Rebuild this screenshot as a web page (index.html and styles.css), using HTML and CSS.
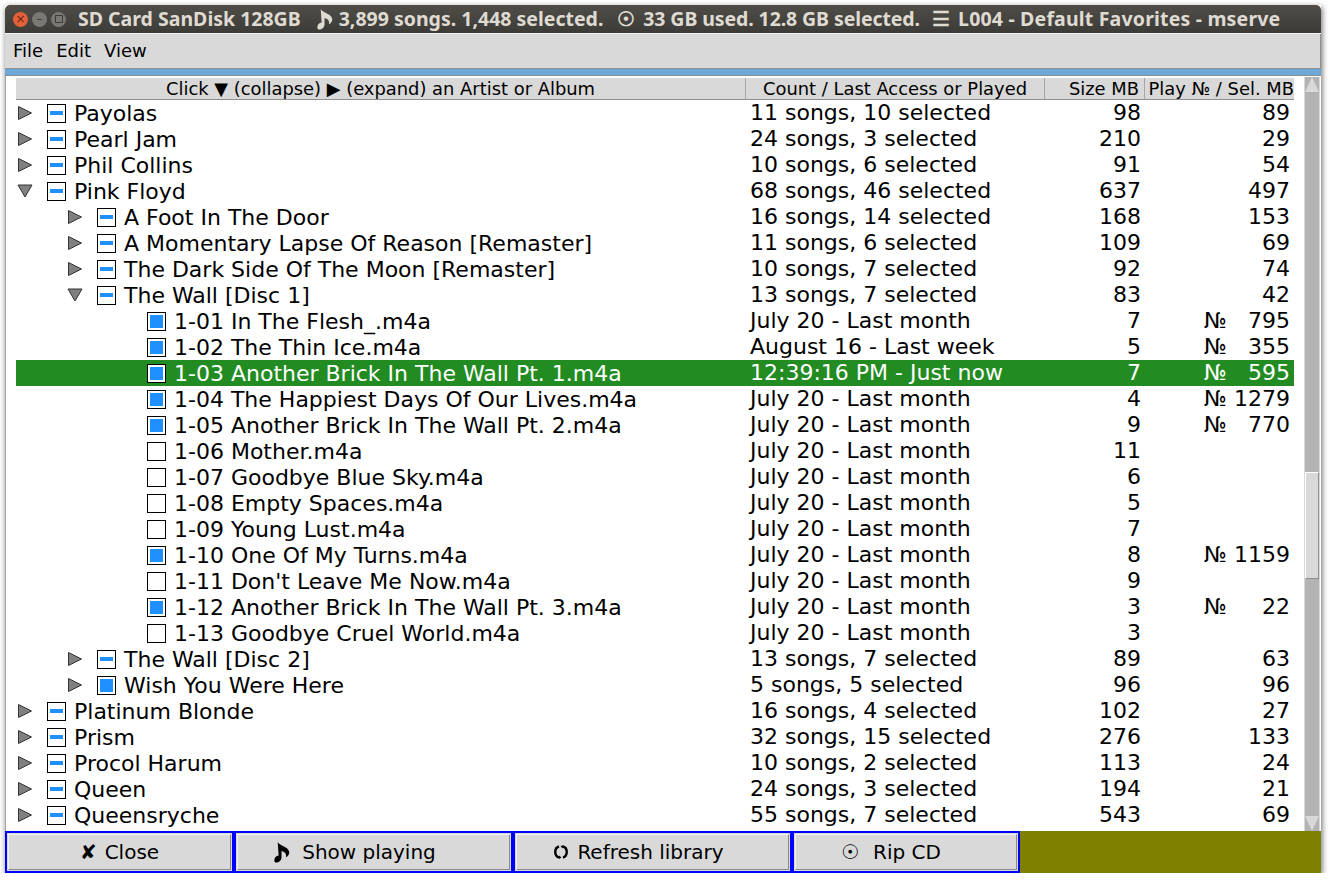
FILE: index.html
```html
<!DOCTYPE html>
<html>
<head>
	<meta charset="utf-8">
	<title>mserve</title>
	<link rel="stylesheet" href="styles.css">
</head>
<body>
<svg class="defs" width="0" height="0">
	<symbol id="note" viewBox="0 0 16 22">
		<path d="M3.500 0 C5 4 14 4.500 15.500 10 C16 12.500 14.500 15 12 16 C13 13 11.500 10.500 7.500 9.500 L7.500 16 C7.500 19.500 4.500 21.500 2 21.500 C-0.500 21.500 -0.500 18 1 16 C2 14.500 3.500 14 4.500 14.500 Z" fill="currentColor"/>
	</symbol>
	<symbol id="refresh" viewBox="0 0 14 14">
		<path d="M5 1.500 C0 3 0 11 5 12.500 M9 1.500 C14 3 14 11 9 12.500" fill="none" stroke="currentColor" stroke-width="2.400"/>
		<path d="M9 0 L9 3.500 L6.500 1.500 Z M5 10.500 L5 14 L7.500 12.500 Z" fill="currentColor"/>
	</symbol>
</svg>

<div class="win">
	<div class="titlebar">
		<div class="wbtns">
			<span class="wbtn close">×</span>
			<span class="wbtn">–</span>
			<span class="wbtn"><i class="sq"></i></span>
		</div>
		<div class="wtitle">
			<span>SD Card SanDisk 128GB</span>
			<span class="ti"><svg class="ti-note"><use href="#note"/></svg>3,899 songs. 1,448 selected.</span>
			<span class="ti ti-used"><span class="tg">☉</span>33 GB used. 12.8 GB selected.</span>
			<span class="ti ti-list"><span class="tg">☰</span>L004 - Default Favorites - mserve</span>
		</div>
	</div>
	<div class="menubar">
		<span>File</span><span>Edit</span><span>View</span>
	</div>
	<div class="stripe"></div>

	<div class="main">
		<div class="tree">
			<div class="heading">
				<div class="h c1">Click ▼ (collapse) ▶ (expand) an Artist or Album</div>
				<div class="h c2">Count / Last Access or Played</div>
				<div class="h c3">Size MB</div>
				<div class="h c4">Play № / Sel. MB</div>
			</div>
			<div id="rows"></div>
		</div>
		<div class="scrollbar">
			<div class="arrow up"></div>
			<div class="track grow1"></div>
			<div class="thumb"></div>
			<div class="track grow2"></div>
			<div class="arrow down"></div>
		</div>
	</div>

	<div class="footer">
		<div class="btnwrap b1"><div class="btn"><span class="bi">✘</span>Close</div></div>
		<div class="btnwrap b2"><div class="btn pad-show"><svg class="bnote"><use href="#note"/></svg>Show playing</div></div>
		<div class="btnwrap b2"><div class="btn pad-ref"><svg class="brefresh"><use href="#refresh"/></svg>Refresh library</div></div>
		<div class="btnwrap b3"><div class="btn pad-rip"><span class="bi rip">☉</span>Rip CD</div></div>
		<div class="olive"></div>
	</div>
</div>

<script>
	// level, open/closed/leaf, check state, name, count, size, selected or play no, is song, row class
	var data = [
		[0, 'c', 'p', 'Payolas', '11 songs, 10 selected', '98', '89'],
		[0, 'c', 'p', 'Pearl Jam', '24 songs, 3 selected', '210', '29'],
		[0, 'c', 'p', 'Phil Collins', '10 songs, 6 selected', '91', '54'],
		[0, 'o', 'p', 'Pink Floyd', '68 songs, 46 selected', '637', '497'],
		[1, 'c', 'p', 'A Foot In The Door', '16 songs, 14 selected', '168', '153'],
		[1, 'c', 'p', 'A Momentary Lapse Of Reason [Remaster]', '11 songs, 6 selected', '109', '69'],
		[1, 'c', 'p', 'The Dark Side Of The Moon [Remaster]', '10 songs, 7 selected', '92', '74'],
		[1, 'o', 'p', 'The Wall [Disc 1]', '13 songs, 7 selected', '83', '42'],
		[2, '', 'f', '1-01 In The Flesh_.m4a', 'July 20 - Last month', '7', '795', 1],
		[2, '', 'f', '1-02 The Thin Ice.m4a', 'August 16 - Last week', '5', '355', 1],
		[2, '', 'f', '1-03 Another Brick In The Wall Pt. 1.m4a', '12:39:16 PM - Just now', '7', '595', 1, 'now'],
		[2, '', 'f', '1-04 The Happiest Days Of Our Lives.m4a', 'July 20 - Last month', '4', '1279', 1],
		[2, '', 'f', '1-05 Another Brick In The Wall Pt. 2.m4a', 'July 20 - Last month', '9', '770', 1],
		[2, '', 'e', '1-06 Mother.m4a', 'July 20 - Last month', '11', ''],
		[2, '', 'e', '1-07 Goodbye Blue Sky.m4a', 'July 20 - Last month', '6', ''],
		[2, '', 'e', '1-08 Empty Spaces.m4a', 'July 20 - Last month', '5', ''],
		[2, '', 'e', '1-09 Young Lust.m4a', 'July 20 - Last month', '7', ''],
		[2, '', 'f', '1-10 One Of My Turns.m4a', 'July 20 - Last month', '8', '1159', 1],
		[2, '', 'e', "1-11 Don't Leave Me Now.m4a", 'July 20 - Last month', '9', ''],
		[2, '', 'f', '1-12 Another Brick In The Wall Pt. 3.m4a', 'July 20 - Last month', '3', '22', 1],
		[2, '', 'e', '1-13 Goodbye Cruel World.m4a', 'July 20 - Last month', '3', ''],
		[1, 'c', 'p', 'The Wall [Disc 2]', '13 songs, 7 selected', '89', '63'],
		[1, 'c', 'f', 'Wish You Were Here', '5 songs, 5 selected', '96', '96'],
		[0, 'c', 'p', 'Platinum Blonde', '16 songs, 4 selected', '102', '27'],
		[0, 'c', 'p', 'Prism', '32 songs, 15 selected', '276', '133'],
		[0, 'c', 'p', 'Procol Harum', '10 songs, 2 selected', '113', '24'],
		[0, 'c', 'p', 'Queen', '24 songs, 3 selected', '194', '21'],
		[0, 'c', 'p', 'Queensryche', '55 songs, 7 selected', '543', '69']
	];

	var arrows = {
		c: '<svg class="tog" viewBox="0 0 16 16"><path d="M1.500 1.500 L14.500 8 L1.500 14.500 Z"/></svg>',
		o: '<svg class="tog" viewBox="0 0 16 16"><path d="M1 2 L15 2 L8 14 Z"/></svg>',
		'': '<span class="tog"></span>'
	};

	var html = '';
	data.forEach(function(r) {
		html += '<div class="row' + (r[8] ? ' ' + r[8] : '') + '">';
		html += '<div class="c1 name lvl' + r[0] + '">';
		html += arrows[r[1]];
		html += '<span class="chk ' + r[2] + '"></span>';
		html += '<span class="lbl">' + r[3] + '</span></div>';
		html += '<div class="c2 cnt">' + r[4] + '</div>';
		html += '<div class="c3 num">' + r[5] + '</div>';
		html += '<div class="c4 num">' + (r[7] ? '<span class="no">№</span>' : '') + '<span>' + r[6] + '</span></div>';
		html += '</div>';
	});
	document.getElementById('rows').innerHTML = html;
</script>
</body>
</html>
```
FILE: styles.css
```css
html, body {
	margin: 0;
	padding: 0;
	background: #ffffff;
}
.defs {
	display: block;
	height: 0;
}
.win {
	width: 1316px;
	height: 868px;
	margin: 5px 0 0 5px;
	background: #ffffff;
	font-family: "DejaVu Sans", sans-serif;
	color: #000000;
	display: flex;
	flex-direction: column;
	box-shadow: 1px 2px 6px rgba(0, 0, 0, 0.6);
	overflow: hidden;
}

.titlebar {
	height: 28px;
	background: linear-gradient(#504d48, #3c3b37);
	border-radius: 5px 5px 0 0;
	border-bottom: 1px solid #f4f4f4;
	display: flex;
	align-items: center;
	flex-shrink: 0;
}
.wbtns {
	display: flex;
	gap: 4px;
	margin-left: 8px;
	width: 65px;
}
.wbtn {
	width: 15px;
	height: 15px;
	border-radius: 50%;
	background: #7a7873;
	color: #3c3b37;
	font-size: 12px;
	line-height: 15px;
	text-align: center;
	display: flex;
	align-items: center;
	justify-content: center;
}
.wbtn.close {
	background: #e2603a;
	color: #6b2410;
}
.sq {
	display: block;
	width: 6px;
	height: 6px;
	border: 1px solid #3c3b37;
}
.wtitle {
	font-family: "Noto Sans", sans-serif;
	font-weight: 700;
	font-size: 19.500px;
	line-height: 26px;
	color: #dfdbd2;
	white-space: nowrap;
	display: flex;
}
.ti {
	margin-left: 16px;
}
.ti-used {
	margin-left: 14px;
	letter-spacing: -0.100px;
}
.ti-list {
	margin-left: 12px;
	letter-spacing: 0.180px;
}
.tg {
	margin-right: 8px;
}
.ti-note {
	width: 16px;
	height: 21px;
	vertical-align: -4px;
	margin-right: 6px;
}

.menubar {
	height: 35px;
	background: #d9d9d9;
	border-bottom: 1px solid #8f8f8f;
	border-right: 1px solid #8f8f8f;
	box-sizing: border-box;
	display: flex;
	align-items: center;
	font-size: 18px;
	padding: 0 0 2px 8px;
	gap: 13px;
	flex-shrink: 0;
}
.stripe {
	height: 6px;
	background: #6ea9d6;
	border-bottom: 1px solid #8f8f8f;
	flex-shrink: 0;
}

.main {
	flex: 1;
	display: flex;
	border-left: 1px solid #a6a6a6;
	padding-top: 2px;
	min-height: 0;
}
.tree {
	width: 1278px;
	margin-left: 10px;
	flex-shrink: 0;
}
.heading {
	display: flex;
	height: 22px;
	background: #d9d9d9;
	border-bottom: 1px solid #8f8f8f;
	box-sizing: border-box;
	font-size: 17.900px;
	line-height: 22px;
}
.c1 { width: 730px; flex-shrink: 0; }
.c2 { width: 299px; flex-shrink: 0; }
.c3 { width: 100px; flex-shrink: 0; }
.c4 { width: 149px; flex-shrink: 0; }
.h {
	box-sizing: border-box;
	border-right: 1px solid #a6a6a6;
	text-align: center;
	white-space: nowrap;
}
.h.c3 { text-align: right; padding-right: 5px; }
.h.c4 { text-align: right; border-right: 0; }

.row {
	display: flex;
	height: 26px;
	font-size: 22px;
	line-height: 26px;
	white-space: nowrap;
}
.row.now {
	background: #228b22;
	color: #ffffff;
}
.name {
	display: flex;
	align-items: center;
	box-sizing: border-box;
}
.lbl {
	line-height: 26px;
	padding-top: 2px;
}
.lvl0 { padding-left: 1px; }
.lvl1 { padding-left: 51px; }
.lvl2 { padding-left: 101px; }
.tog {
	width: 16px;
	height: 16px;
	margin-right: 14px;
	flex-shrink: 0;
}
.tog path {
	fill: #808080;
	stroke: #333333;
	stroke-width: 1;
}
.chk {
	width: 19px;
	height: 19px;
	box-sizing: border-box;
	border: 1px solid #000000;
	background: #ffffff;
	margin-right: 8px;
	flex-shrink: 0;
	display: flex;
	align-items: center;
	justify-content: center;
}
.chk.p::after {
	content: "";
	width: 13px;
	height: 4px;
	background: #1e90ff;
}
.chk.f::after {
	content: "";
	width: 13px;
	height: 13px;
	background: #1e90ff;
}
.cnt {
	padding-left: 4px;
	box-sizing: border-box;
}
.num {
	text-align: right;
	padding-right: 4px;
	box-sizing: border-box;
	display: flex;
	justify-content: flex-end;
}
.no {
	margin-right: auto;
	padding-left: 59px;
}

.scrollbar {
	width: 16px;
	margin-left: 10px;
	display: flex;
	flex-direction: column;
	background: #b3b3b3;
	border-left: 1px solid #d9d9d9;
	border-right: 1px solid #d9d9d9;
	box-sizing: border-box;
	margin-top: -1px;
}
.arrow {
	height: 15px;
	flex-shrink: 0;
	background: #d9d9d9;
}
.arrow.up { clip-path: polygon(50% 0, 100% 100%, 0 100%); }
.arrow.down { clip-path: polygon(0 0, 100% 0, 50% 100%); }
.track.grow1 { height: 380px; flex-shrink: 0; }
.track.grow2 { flex: 1; }
.thumb {
	height: 107px;
	flex-shrink: 0;
	background: #d9d9d9;
	border: 1px solid #8f8f8f;
	border-top-color: #ffffff;
	border-left-color: #ffffff;
	box-sizing: border-box;
}

.footer {
	height: 42px;
	display: flex;
	background: #808000;
	flex-shrink: 0;
}
.btnwrap {
	box-sizing: border-box;
	border: 2px solid #0000ff;
	background: #d9d9d9;
	padding: 1px;
}
.b1 { width: 229px; }
.b2 { width: 279px; }
.b3 { width: 228px; }
.olive { flex: 1; }
.btn {
	height: 100%;
	box-sizing: border-box;
	background: #d9d9d9;
	border: 1px solid #f2f2f2;
	border-right-color: #8a8a8a;
	border-bottom-color: #8a8a8a;
	display: flex;
	align-items: center;
	justify-content: center;
	font-size: 20px;
	line-height: 24px;
}
.pad-show { padding-right: 37px; }
.pad-ref { padding-right: 27px; }
.pad-rip { padding-right: 30px; }
.bi {
	margin-right: 8px;
}
.bi.rip {
	margin-right: 14px;
}
.bnote {
	width: 16px;
	height: 21px;
	margin-right: 12px;
}
.brefresh {
	width: 14px;
	height: 14px;
	margin-right: 9px;
}
```
